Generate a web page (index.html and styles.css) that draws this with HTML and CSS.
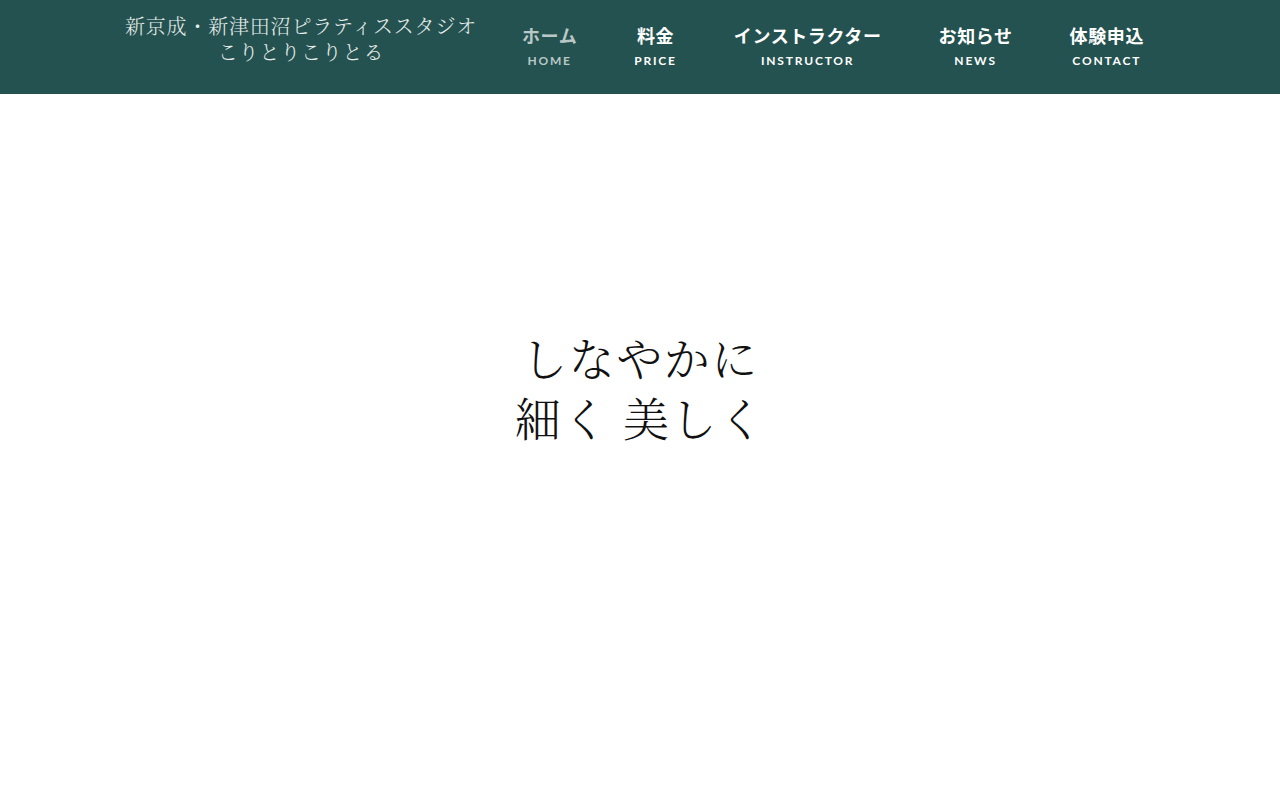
FILE: index.html
```html
<!DOCTYPE html>
<html lang="ja">
<head>
  <meta charset="UTF-8">
  <meta name="viewport" content="width=device-width, initial-scale=1">
  <title>こりとりこりとる</title>
  <link rel="stylesheet" href="styles.css">
</head>
<body>

<header class="site-header">
  <div class="inner">
    <a class="logo" href="#">
      <span>新京成・新津田沼ピラティススタジオ</span>
      <span>こりとりこりとる</span>
    </a>
    <nav class="global-nav">
      <a class="nav-item current" href="#"><span class="ja">ホーム</span><span class="en">HOME</span></a>
      <a class="nav-item" href="#"><span class="ja">料金</span><span class="en">PRICE</span></a>
      <a class="nav-item" href="#"><span class="ja">インストラクター</span><span class="en">INSTRUCTOR</span></a>
      <a class="nav-item" href="#"><span class="ja">お知らせ</span><span class="en">NEWS</span></a>
      <a class="nav-item" href="#"><span class="ja">体験申込</span><span class="en">CONTACT</span></a>
    </nav>
  </div>
</header>

<main class="hero">
  <h1 class="catch"><span>しなやかに</span><span>細く 美しく</span></h1>
</main>

</body>
</html>
```

FILE: styles.css
```css
/* 全体 */
body {
  margin: 0;
  padding: 0;
  background-color: #fff;
  font-family: "Noto Sans CJK JP", "Noto Sans", sans-serif;
}
a {
  text-decoration: none;
}

/* ヘッダー */
.site-header {
  background-color: #245250;
  height: 94px;
}
.site-header .inner {
  width: 1032px;
  margin: 0 auto;
  height: 100%;
  display: flex;
  align-items: center;
}
.logo {
  display: flex;
  flex-direction: column;
  align-items: center;
  width: 354px;
  margin-top: -17px;
  color: #e6ecea;
  font-family: "Noto Serif CJK JP", "IPAMincho", "Liberation Serif", serif;
  font-size: 20px;
  font-weight: 300;
  line-height: 26px;
  letter-spacing: 0.8px;
  white-space: nowrap;
}

/* ナビ */
.global-nav {
  display: flex;
  gap: 57px;
  margin-left: 44px;
  margin-top: -2px;
}
.nav-item {
  display: flex;
  flex-direction: column;
  align-items: center;
  color: #fff;
}
.nav-item .ja {
  font-size: 18px;
  font-weight: 700;
  line-height: 22px;
  letter-spacing: 0.6px;
}
.nav-item .en {
  margin-top: 8px;
  font-family: "Lato", "Noto Sans", sans-serif;
  font-size: 12px;
  font-weight: 700;
  line-height: 14px;
  letter-spacing: 1.8px;
}
.nav-item.current {
  color: #b9c8c6;
}

/* メイン */
.hero {
  height: 706px;
  box-sizing: border-box;
  padding-top: 232px;
  text-align: center;
}
.catch {
  margin: 0;
  display: flex;
  flex-direction: column;
  align-items: center;
  color: #111;
  font-family: "Noto Serif CJK JP", "IPAMincho", "Liberation Serif", serif;
  font-size: 46px;
  font-weight: 300;
  line-height: 60px;
  letter-spacing: 1.5px;
}
```
